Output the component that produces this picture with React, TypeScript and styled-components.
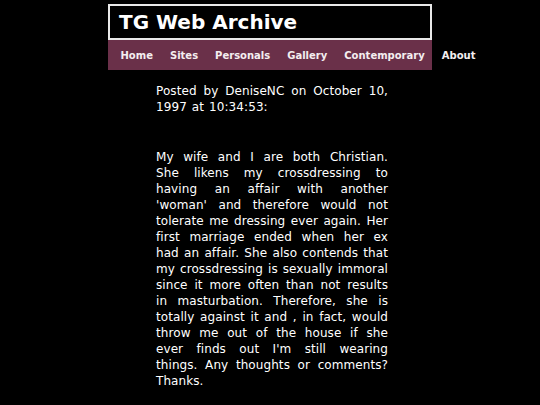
import React from "react";
import styled, { createGlobalStyle } from "styled-components";

const Global = createGlobalStyle`
  html, body { margin: 0; padding: 0; background: #000; }
  body { font-family: "DejaVu Sans", Verdana, sans-serif; color: #fff; }
`;

const Page = styled.div`
  width: 540px;
  padding-top: 4px;
`;

const Masthead = styled.header`
  width: 324px;
  margin: 0 auto;
`;

const TitleBox = styled.div`
  box-sizing: border-box;
  height: 36px;
  border: 2px solid #e8e8e8;
  background: #000;
  display: flex;
  align-items: center;
  padding-left: 9px;
`;

const Title = styled.h1`
  margin: 0;
  font-size: 20px;
  font-weight: bold;
  color: #fff;
  white-space: nowrap;
`;

const Nav = styled.nav`
  height: 30px;
  background: #6a3049;
  display: flex;
  align-items: center;
  padding-left: 4px;
  white-space: nowrap;
`;

const NavLink = styled.a`
  font-size: 10px;
  font-weight: bold;
  color: #f4eef0;
  padding: 0 8.5px;
  text-decoration: none;
  flex-shrink: 0;
`;

const Content = styled.main`
  width: 232px;
  margin-left: 156px;
  margin-top: 13px;
  font-size: 12px;
  letter-spacing: 0.08px;
  word-spacing: 1.1px;
  line-height: 16px;
  text-align: justify;
  color: #fff;
`;

const Para = styled.p<{ $gap?: number }>`
  margin: 0 0 ${(p) => p.$gap ?? 0}px 0;
`;

const links = ["Home", "Sites", "Personals", "Gallery", "Contemporary", "About"];

export default function App() {
  return (
    <Page>
      <Global />
      <Masthead>
        <TitleBox>
          <Title>TG Web Archive</Title>
        </TitleBox>
        <Nav>
          {links.map((l) => (
            <NavLink key={l} href="#">
              {l}
            </NavLink>
          ))}
        </Nav>
      </Masthead>
      <Content>
        <Para $gap={34}>Posted by DeniseNC on October 10, 1997 at 10:34:53:</Para>
        <Para>
          My wife and I are both Christian. She likens my crossdressing to having an
          affair with another 'woman' and therefore would not tolerate me dressing ever
          again. Her first marriage ended when her ex had an affair. She also contends
          that my crossdressing is sexually immoral since it more often than not results
          in masturbation. Therefore, she is totally against it and , in fact, would
          throw me out of the house if she ever finds out I'm still wearing things. Any
          thoughts or comments? Thanks.
        </Para>
      </Content>
    </Page>
  );
}
